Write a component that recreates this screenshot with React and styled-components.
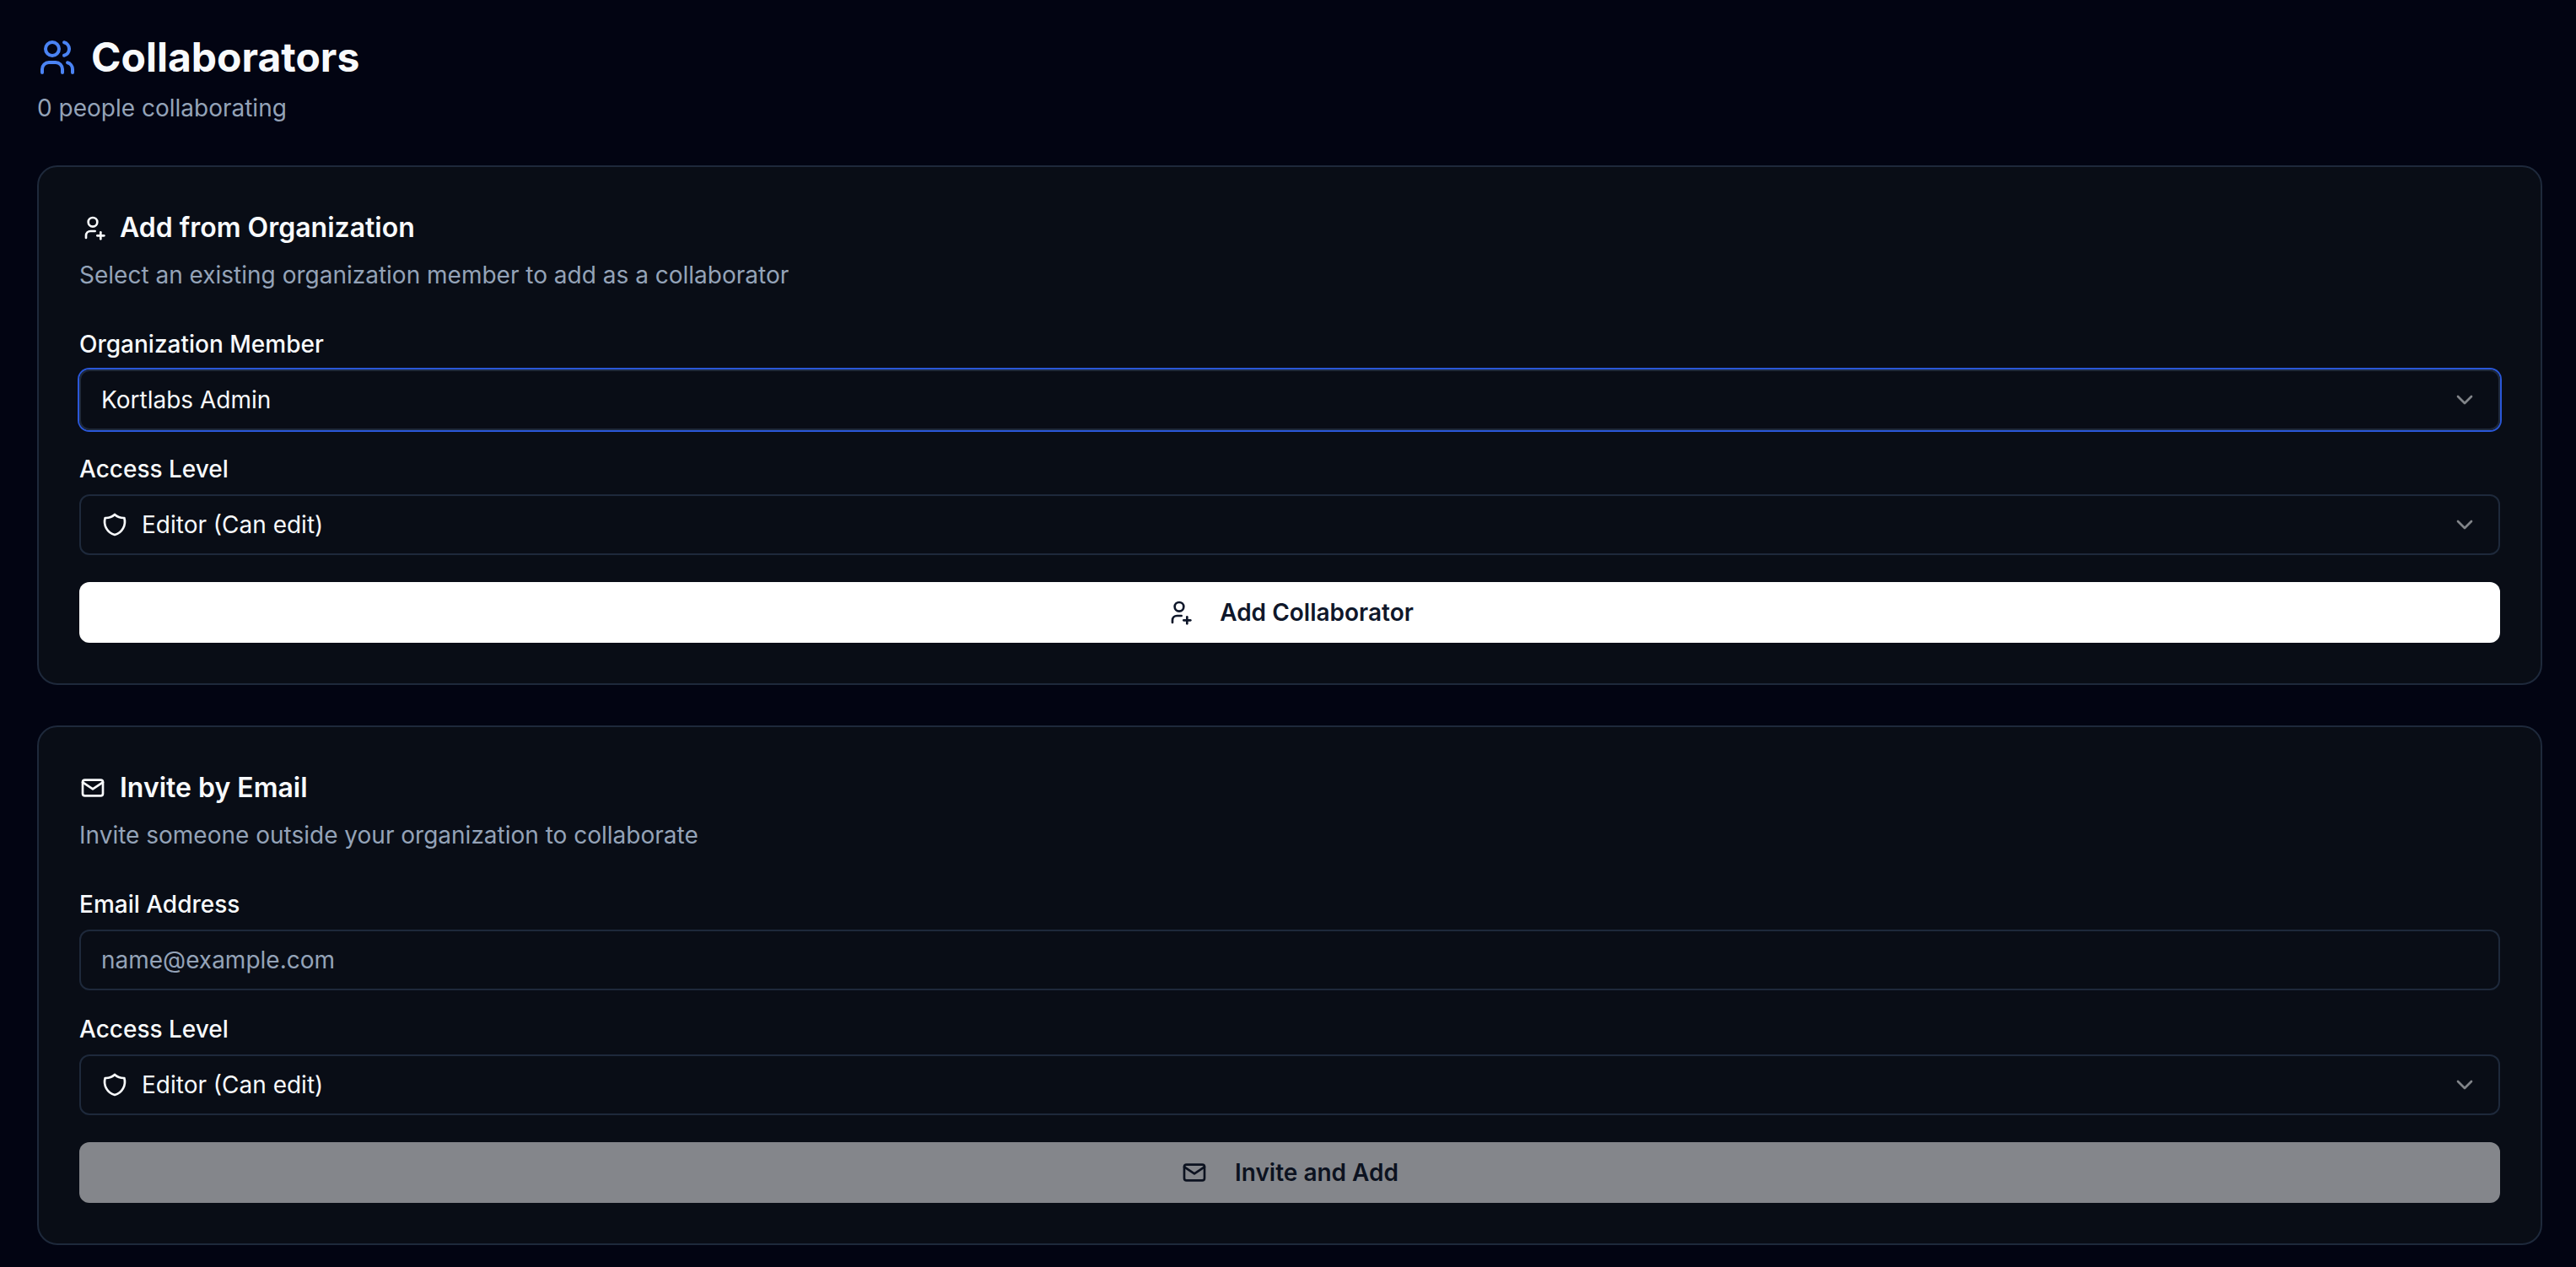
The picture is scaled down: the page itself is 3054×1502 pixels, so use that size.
import React, { useState } from 'react';
import styled, { createGlobalStyle, css } from 'styled-components';
import { TbChevronDown, TbMail, TbShield, TbUserPlus, TbUsers } from 'react-icons/tb';

const GlobalStyle = createGlobalStyle`
  *,
  *::before,
  *::after {
    box-sizing: border-box;
  }

  body {
    margin: 0;
    background: #020412;
    color: #f8fafc;
    font-family: Inter, sans-serif;
    font-size: 28px;
    line-height: 40px;
    font-optical-sizing: none;
    -webkit-font-smoothing: antialiased;
  }
`;

const StyledPage = styled.main`
  display: flex;
  flex-direction: column;
  gap: 48px;
  padding: 36px 40px 26px 44px;
`;

const StyledHeader = styled.header`
  display: flex;
  flex-direction: column;
  gap: 8px;
`;

const StyledTitle = styled.h1`
  display: flex;
  align-items: center;
  gap: 16px;
  margin: 0;
  font-size: 48px;
  font-weight: 700;
  line-height: 64px;

  svg {
    width: 48px;
    height: 48px;
    color: #4a83f4;
  }
`;

const StyledMuted = styled.p`
  margin: 0;
  color: #94a3b8;
`;

const StyledCard = styled.section`
  display: flex;
  flex-direction: column;
  gap: 48px;
  padding: 48px;
  background: #090d16;
  border: 2px solid #1e293b;
  border-radius: 24px;
`;

const StyledCardHeader = styled.div`
  display: flex;
  flex-direction: column;
  gap: 12px;
`;

const StyledCardTitle = styled.h2`
  display: flex;
  align-items: center;
  gap: 16px;
  margin: 0;
  font-size: 32px;
  font-weight: 600;
  line-height: 48px;
  font-optical-sizing: auto;

  svg {
    width: 32px;
    height: 32px;
  }
`;

const StyledForm = styled.form`
  display: flex;
  flex-direction: column;
  gap: 32px;
`;

const StyledField = styled.div`
  display: flex;
  flex-direction: column;
  gap: 16px;
`;

const StyledLabel = styled.label`
  font-weight: 500;
  line-height: 28px;
`;

const controlStyles = css`
  width: 100%;
  height: 72px;
  padding: 0 24px;
  background: transparent;
  border: 2px solid #1e293b;
  border-radius: 12px;
  color: inherit;
  font: inherit;
  outline: none;
`;

const StyledInput = styled.input`
  ${controlStyles}

  &::placeholder {
    color: #94a3b8;
    opacity: 1;
  }
`;

// the icons share one grid cell with the select so they sit on top of it
const StyledSelectBox = styled.div`
  display: grid;
  align-items: center;

  > * {
    grid-area: 1 / 1;
  }

  svg {
    width: 32px;
    height: 32px;
    margin: 0 26px;
    pointer-events: none;
  }

  svg:last-child {
    justify-self: end;
    opacity: 0.5;
  }
`;

const StyledSelect = styled.select`
  ${controlStyles}
  appearance: none;
  padding-left: ${(props) => (props.$hasIcon ? '72px' : '24px')};

  option {
    background: #090d16;
  }

  ${(props) =>
    props.$active &&
    css`
      box-shadow: 0 0 0 2px #2a57d8;
    `}
`;

const StyledButton = styled.button`
  display: flex;
  align-items: center;
  justify-content: center;
  gap: 32px;
  height: 72px;
  padding: 0 32px;
  background: #ffffff;
  border: 0;
  border-radius: 12px;
  color: #0f172a;
  font: inherit;
  font-weight: 600;
  cursor: pointer;

  svg {
    width: 32px;
    height: 32px;
  }

  &:disabled {
    opacity: 0.5;
    cursor: default;
  }
`;

function SelectField({ id, label, icon, active, value, onChange, options }) {
  return (
    <StyledField>
      <StyledLabel htmlFor={id}>{label}</StyledLabel>
      <StyledSelectBox>
        <StyledSelect id={id} value={value} onChange={onChange} $hasIcon={!!icon} $active={active}>
          {options.map((option) => (
            <option key={option}>{option}</option>
          ))}
        </StyledSelect>
        {icon}
        <TbChevronDown />
      </StyledSelectBox>
    </StyledField>
  );
}

function CardHeader({ icon, title, description }) {
  return (
    <StyledCardHeader>
      <StyledCardTitle>
        {icon}
        {title}
      </StyledCardTitle>
      <StyledMuted>{description}</StyledMuted>
    </StyledCardHeader>
  );
}

const members = ['Kortlabs Admin'];
const levels = ['Editor (Can edit)'];

function App() {
  const [member, setMember] = useState(members[0]);
  const [memberLevel, setMemberLevel] = useState(levels[0]);
  const [email, setEmail] = useState('');
  const [emailLevel, setEmailLevel] = useState(levels[0]);

  const handleSubmit = (e) => e.preventDefault();

  return (
    <>
      <GlobalStyle />
      <StyledPage>
        <StyledHeader>
          <StyledTitle>
            <TbUsers />
            Collaborators
          </StyledTitle>
          <StyledMuted>0 people collaborating</StyledMuted>
        </StyledHeader>

        <StyledCard>
          <CardHeader
            icon={<TbUserPlus />}
            title="Add from Organization"
            description="Select an existing organization member to add as a collaborator"
          />
          <StyledForm onSubmit={handleSubmit}>
            <SelectField
              id="member"
              label="Organization Member"
              active
              value={member}
              onChange={(e) => setMember(e.target.value)}
              options={members}
            />
            <SelectField
              id="member-level"
              label="Access Level"
              icon={<TbShield />}
              value={memberLevel}
              onChange={(e) => setMemberLevel(e.target.value)}
              options={levels}
            />
            <StyledButton type="submit">
              <TbUserPlus />
              Add Collaborator
            </StyledButton>
          </StyledForm>
        </StyledCard>

        <StyledCard>
          <CardHeader
            icon={<TbMail />}
            title="Invite by Email"
            description="Invite someone outside your organization to collaborate"
          />
          <StyledForm onSubmit={handleSubmit}>
            <StyledField>
              <StyledLabel htmlFor="email">Email Address</StyledLabel>
              <StyledInput
                id="email"
                type="email"
                placeholder="name@example.com"
                value={email}
                onChange={(e) => setEmail(e.target.value)}
              />
            </StyledField>
            <SelectField
              id="email-level"
              label="Access Level"
              icon={<TbShield />}
              value={emailLevel}
              onChange={(e) => setEmailLevel(e.target.value)}
              options={levels}
            />
            <StyledButton type="submit" disabled={!email}>
              <TbMail />
              Invite and Add
            </StyledButton>
          </StyledForm>
        </StyledCard>
      </StyledPage>
    </>
  );
}

export default App;
